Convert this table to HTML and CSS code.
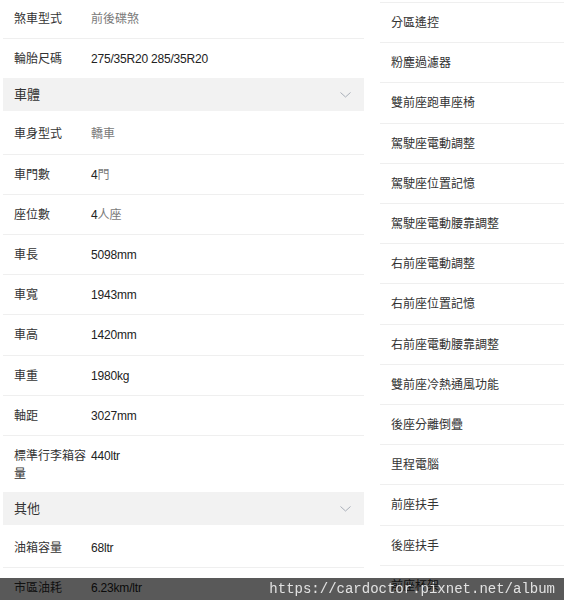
FILE: index.html
```html
<!DOCTYPE html>
<html lang="zh-Hant">
<head>
<meta charset="utf-8">
<title>規格配備</title>
<link rel="stylesheet" href="styles.css">
</head>
<body>
<div class="page">
  <section class="specs">
    <div class="group">
      <div class="row"><div class="label">煞車型式</div><div class="value"><span class="soft">前後碟煞</span></div></div>
      <div class="row last"><div class="label">輪胎尺碼</div><div class="value">275/35R20 285/35R20</div></div>
    </div>
    <div class="group-head">
      <span class="group-title">車體</span>
      <svg class="chev" width="11" height="6" viewBox="0 0 11 6"><polyline points="0.5,0.5 5.5,5 10.5,0.5" fill="none" stroke="#a9afb8" stroke-width="1"/></svg>
    </div>
    <div class="group">
      <div class="row"><div class="label">車身型式</div><div class="value"><span class="soft">轎車</span></div></div>
      <div class="row"><div class="label">車門數</div><div class="value">4<span class="soft">門</span></div></div>
      <div class="row"><div class="label">座位數</div><div class="value">4<span class="soft">人座</span></div></div>
      <div class="row"><div class="label">車長</div><div class="value">5098mm</div></div>
      <div class="row"><div class="label">車寬</div><div class="value">1943mm</div></div>
      <div class="row"><div class="label">車高</div><div class="value">1420mm</div></div>
      <div class="row"><div class="label">車重</div><div class="value">1980kg</div></div>
      <div class="row"><div class="label">軸距</div><div class="value">3027mm</div></div>
      <div class="row last"><div class="label">標準行李箱容量</div><div class="value">440ltr</div></div>
    </div>
    <div class="group-head">
      <span class="group-title">其他</span>
      <svg class="chev" width="11" height="6" viewBox="0 0 11 6"><polyline points="0.5,0.5 5.5,5 10.5,0.5" fill="none" stroke="#a9afb8" stroke-width="1"/></svg>
    </div>
    <div class="group">
      <div class="row"><div class="label">油箱容量</div><div class="value">68ltr</div></div>
      <div class="row"><div class="label">市區油耗</div><div class="value">6.23km/ltr</div></div>
    </div>
  </section>
  <section class="features">
    <ul class="feature-list">
      <li>分區遙控</li>
      <li>粉塵過濾器</li>
      <li>雙前座跑車座椅</li>
      <li>駕駛座電動調整</li>
      <li>駕駛座位置記憶</li>
      <li>駕駛座電動腰靠調整</li>
      <li>右前座電動調整</li>
      <li>右前座位置記憶</li>
      <li>右前座電動腰靠調整</li>
      <li>雙前座冷熱通風功能</li>
      <li>後座分離倒疊</li>
      <li>里程電腦</li>
      <li>前座扶手</li>
      <li>後座扶手</li>
      <li>前座杯架</li>
    </ul>
  </section>
</div>
<div class="watermark">https://cardoctor.pixnet.net/album</div>
</body>
</html>
```
FILE: styles.css
```css
html, body {
  margin: 0;
  padding: 0;
  background: #ffffff;
  overflow: hidden;
}
body {
  font-family: "Liberation Sans", Arial, "Noto Sans CJK TC", sans-serif;
  font-size: 12px;
  color: #333333;
}
.page {
  display: flex;
  align-items: flex-start;
  gap: 16px;
  padding-left: 3px;
  width: 620px;
}
.specs {
  width: 361px;
  flex-shrink: 0;
  margin-top: -1px;
}
.row {
  display: flex;
  align-items: flex-start;
  padding: 11px 0 9px;
  border-bottom: 1px solid #efefef;
}
.row.last {
  border-bottom: none;
}
.label {
  width: 77px;
  flex-shrink: 0;
  padding-left: 11px;
  line-height: 18px;
  color: #333333;
}
.value {
  line-height: 19.2px;
  color: #222222;
  letter-spacing: -0.2px;
}
.soft {
  color: #7a7a7a;
  letter-spacing: 0;
}
.group-head {
  display: flex;
  align-items: center;
  justify-content: space-between;
  height: 33px;
  margin-bottom: 3px;
  padding: 0 13px 0 11px;
  background: #f2f2f2;
}
.group-title {
  font-size: 13px;
  color: #333333;
  margin-top: -3px;
}
.chev {
  display: block;
  margin-top: 1px;
}
.features {
  flex: 1;
  margin-top: 2px;
}
.feature-list {
  list-style: none;
  margin: 0;
  padding: 0;
  border-top: 1px solid #efefef;
}
.feature-list li {
  padding: 11px 11px 9px;
  line-height: 19.2px;
  border-bottom: 1px solid #efefef;
  color: #333333;
}
.watermark {
  position: fixed;
  left: 0;
  right: 0;
  bottom: 0;
  height: 22px;
  background: rgba(0, 0, 0, 0.65);
  color: #e2e2e2;
  font-family: "Liberation Mono", "Courier New", monospace;
  font-size: 14px;
  line-height: 22px;
  text-align: right;
  padding-right: 9px;
  box-sizing: border-box;
}
```
